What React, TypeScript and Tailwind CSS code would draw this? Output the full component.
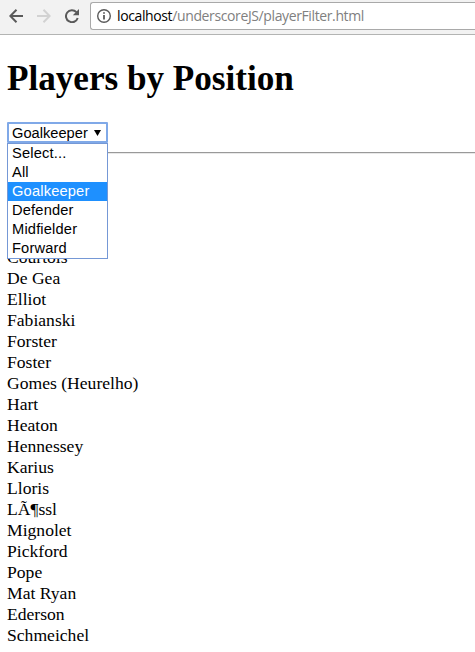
import React from "react";

const options: string[] = ["Select...", "All", "Goalkeeper", "Defender", "Midfielder", "Forward"];

const players: string[] = [
  "Courtois", "De Gea", "Elliot", "Fabianski", "Forster", "Foster", "Gomes (Heurelho)",
  "Hart", "Heaton", "Hennessey", "Karius", "Lloris", "LÃ¶ssl", "Mignolet", "Pickford",
  "Pope", "Mat Ryan", "Ederson", "Schmeichel",
];

function Toolbar() {
  return (
    <header className="flex h-[35px] items-start border-b border-[#b3b4b3] bg-[#f2f2f2] pl-[9px] pt-[2px]">
      <div className="flex h-7 items-center">
        <svg width="14" height="14" viewBox="0 0 14 14" fill="none" stroke="#5a5a5a" strokeWidth="2">
          <path d="M14 7H1.5M7.5 0.7L1.3 7l6.2 6.3" />
        </svg>
        <svg className="ml-[14px]" width="14" height="14" viewBox="0 0 14 14" fill="none" stroke="#d2d2d2" strokeWidth="2">
          <path d="M0 7h12.5M6.5 0.7L12.7 7l-6.2 6.3" />
        </svg>
        <svg className="ml-[14px]" width="14" height="14" viewBox="0 0 14 14">
          <path d="M11.4 3.1A6 6 0 1 0 12.7 9" fill="none" stroke="#5a5a5a" strokeWidth="2" />
          <path d="M14 0v6.2H7.8z" fill="#5a5a5a" />
        </svg>
      </div>
      <div className="ml-[11px] flex h-7 flex-1 items-center rounded-l-[3px] border border-r-0 border-[#a9a9a9] bg-white pl-[6px]">
        <svg width="14" height="14" viewBox="0 0 14 14" fill="none" stroke="#5a5a5a">
          <circle cx="7" cy="7" r="6.3" strokeWidth="1.4" />
          <path d="M7 6v4.5M7 3.3v1.5" strokeWidth="1.8" />
        </svg>
        <span className="ml-[6px] whitespace-nowrap font-['Open_Sans',sans-serif] text-[14px] leading-5 tracking-[-0.38px] text-[#808080]">
          <span className="text-black">localhost</span>/underscoreJS/playerFilter.html
        </span>
      </div>
    </header>
  );
}

function PositionSelect() {
  return (
    <div className="relative w-[101px] font-['Liberation_Sans',Arial,sans-serif] text-[14.67px]">
      <div className="flex h-[21px] items-center justify-between rounded-[1px] border-2 border-[#80a9e8] bg-white pl-[3px] pr-[5px]">
        <span className="pt-[2px] leading-[17px]">Goalkeeper</span>
        <svg width="7" height="6" viewBox="0 0 7 6">
          <path d="M0 0h7L3.5 6z" fill="#000" />
        </svg>
      </div>
      <ul className="absolute left-0 top-[21px] z-10 w-[101px] border border-[#7598d6] bg-white">
        {options.map((option) => (
          <li
            key={option}
            className={`h-[19px] pl-1 leading-[19px] tracking-[0.17px] ${option === "Goalkeeper" ? "bg-[#1e90ff] text-white" : "text-black"}`}
          >
            {option}
          </li>
        ))}
      </ul>
    </div>
  );
}

export default function App() {
  return (
    <div className="h-[652px] overflow-hidden bg-white font-['Liberation_Serif','Times_New_Roman',serif] text-[17.6px] text-black">
      <Toolbar />
      <main className="pl-[7px] pt-6">
        <h1 className="h-10 text-[35.2px] font-bold leading-10 tracking-[-0.03px]">Players by Position</h1>
        <div className="mt-[23px]">
          <PositionSelect />
        </div>
        <hr className="mt-[9px] h-[2px] border-b border-t border-b-[#e8e8e8] border-t-[#999999]" />
        <ul className="mt-[93px]">
          {players.map((player) => (
            <li key={player} className="h-[21px] leading-[21px]">{player}</li>
          ))}
        </ul>
      </main>
    </div>
  );
}
